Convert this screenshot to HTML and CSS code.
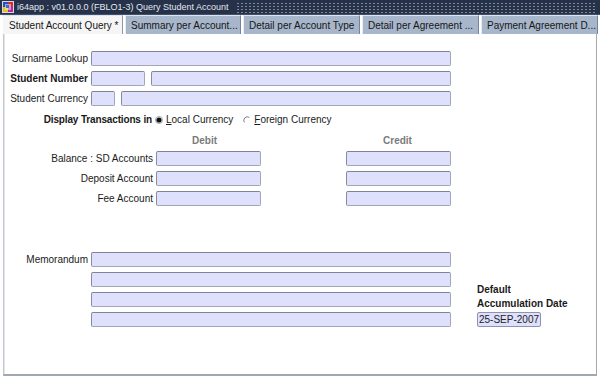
FILE: index.html
```html
<!DOCTYPE html>
<html>
<head>
<meta charset="utf-8">
<link rel="stylesheet" href="styles.css">
</head>
<body>
<div class="app">
  <div class="titlebar">
    <svg class="app-icon" width="12" height="12" viewBox="0 0 12 12">
      <rect x="0" y="0" width="12" height="12" fill="#d8d8e8"/>
      <rect x="1" y="1" width="5" height="5" fill="#2b4fb8"/>
      <rect x="6" y="1" width="5" height="5" fill="#d8283c"/>
      <rect x="1" y="6" width="5" height="5" fill="#e8c020"/>
      <rect x="6" y="6" width="5" height="5" fill="#b02ca0"/>
      <rect x="3" y="3" width="6" height="6" fill="#f0f0f0" opacity="0.55"/>
      <rect x="4" y="4" width="3" height="3" fill="#3070e0"/>
    </svg>
    <span class="title-text">i64app : v01.0.0.0 (FBLO1-3) Query Student Account</span>
    <span class="title-fill"></span>
  </div>
  <div class="tabs">
    <div class="tab active">Student Account Query *</div>
    <div class="tab w116">Summary per Account...</div>
    <div class="tab">Detail per Account Type</div>
    <div class="tab">Detail per Agreement ...</div>
    <div class="tab">Payment Agreement D...</div>
  </div>
  <div class="panel">
    <div class="row">
      <label class="lbl">Surname Lookup</label>
      <div class="field w360"></div>
    </div>
    <div class="row">
      <label class="lbl bold">Student Number</label>
      <div class="field w54"></div>
      <div class="field w300 gap6"></div>
    </div>
    <div class="row">
      <label class="lbl">Student Currency</label>
      <div class="field w24"></div>
      <div class="field w330 gap6"></div>
    </div>
    <div class="radio-row">
      <span class="radio-lbl bold">Display Transactions in</span>
      <svg class="radio" width="8" height="8" viewBox="0 0 8 8">
        <circle cx="4" cy="4" r="3.6" fill="#fff" stroke="#9a9a9a" stroke-width="0.8"/>
        <circle cx="4" cy="4" r="2.6" fill="#111"/>
      </svg>
      <span class="opt"><u>L</u>ocal Currency</span>
      <svg class="radio r2" width="8" height="8" viewBox="0 0 8 8">
        <path d="M6.4 1.4 A3.6 3.6 0 0 0 1.4 6.4" fill="none" stroke="#808080" stroke-width="1"/>
      </svg>
      <span class="opt"><u>F</u>oreign Currency</span>
    </div>
    <div class="heads">
      <span class="head">Debit</span>
      <span class="head credit">Credit</span>
    </div>
    <div class="row">
      <label class="lbl2">Balance : SD Accounts</label>
      <div class="field w105"></div>
      <div class="field w105 gap85"></div>
    </div>
    <div class="row">
      <label class="lbl2">Deposit Account</label>
      <div class="field w105"></div>
      <div class="field w105 gap85"></div>
    </div>
    <div class="row">
      <label class="lbl2">Fee Account</label>
      <div class="field w105"></div>
      <div class="field w105 gap85"></div>
    </div>
    <div class="memo-block">
      <div class="memo">
        <div class="row">
          <label class="lbl">Memorandum</label>
          <div class="field w360"></div>
        </div>
        <div class="row">
          <span class="lbl"></span>
          <div class="field w360"></div>
        </div>
        <div class="row">
          <span class="lbl"></span>
          <div class="field w360"></div>
        </div>
        <div class="row last">
          <span class="lbl"></span>
          <div class="field w360"></div>
        </div>
      </div>
      <div class="date-block">
        <div class="date-lbl bold">Default</div>
        <div class="date-lbl bold">Accumulation Date</div>
        <div class="field date">25-SEP-2007</div>
      </div>
    </div>
  </div>
</div>
</body>
</html>
```

FILE: styles.css
```css
html, body {
  margin: 0;
  padding: 0;
}
body {
  width: 600px;
  height: 378px;
  overflow: hidden;
  background: #ffffff;
  font-family: "Liberation Sans", Arial, sans-serif;
  font-size: 10px;
  color: #1a1a1a;
}
.app {
  display: flex;
  flex-direction: column;
  height: 378px;
}
.titlebar {
  height: 14px;
  display: flex;
  align-items: center;
  background: #25324a;
  color: #e4e8ee;
  padding-left: 2px;
  gap: 3px;
  border-bottom: 1px solid #44506a;
}
.app-icon {
  flex: none;
}
.title-text {
  white-space: nowrap;
  font-size: 9px;
}
.title-fill {
  flex: 1;
  height: 11px;
  margin: 0 3px 0 4px;
  background-color: #25324a;
  background-image: radial-gradient(circle, #7e889a 0.7px, transparent 1.1px);
  background-size: 4px 3px;
}
.tabs {
  height: 19px;
  display: flex;
  gap: 2px;
  padding-left: 2px;
  background: #ffffff;
}
.tab {
  width: 117px;
  box-sizing: border-box;
  display: flex;
  align-items: center;
  padding-left: 5px;
  background: #a7b6ca;
  border-top: 1px solid #dfe5ee;
  border-left: 1px solid #e8edf4;
  border-right: 1px solid #75849a;
  white-space: nowrap;
  overflow: hidden;
  color: #161616;
}
.tab.w116 {
  width: 116px;
}
.tab.active {
  width: 121px;
  padding-left: 6px;
  background: #f5f5f5;
  border-left-color: #ffffff;
  border-right-color: #8e96a4;
}
.panel {
  flex: 1;
  margin: 0 3px 2px 3px;
  border-left: 1px solid #c4c8ce;
  border-right: 1px solid #a4a9b2;
  border-bottom: 2px solid #a2a8b2;
  box-shadow: inset 1px 0 0 #e2e4e8;
  padding: 17px 0 0 1px;
  display: flex;
  flex-direction: column;
}
.row {
  display: flex;
  align-items: center;
  height: 15px;
  margin-bottom: 5px;
}
.lbl {
  width: 86px;
  padding-right: 3px;
  text-align: right;
  box-sizing: border-box;
  white-space: nowrap;
}
.lbl2 {
  width: 151px;
  padding-right: 3px;
  text-align: right;
  box-sizing: border-box;
  white-space: nowrap;
}
.bold {
  font-weight: bold;
}
.field {
  height: 15px;
  box-sizing: border-box;
  background: #dfe0fc;
  border: 1px solid #a2a7b8;
  border-top-color: #7e8496;
  border-left-color: #868c9e;
  border-radius: 2px;
  flex: none;
}
.w360 { width: 360px; }
.w54 { width: 54px; }
.w300 { width: 300px; }
.w24 { width: 24px; }
.w330 { width: 330px; }
.w105 { width: 105px; }
.gap6 { margin-left: 6px; }
.gap85 { margin-left: 85px; }
.radio-row {
  display: flex;
  align-items: center;
  height: 13px;
  margin-top: 2px;
}
.radio-lbl {
  width: 147px;
  text-align: right;
  white-space: nowrap;
  letter-spacing: -0.15px;
}
.radio {
  margin-left: 3px;
  flex: none;
}
.radio.r2 {
  margin-left: 10px;
}
.opt {
  margin-left: 3px;
  white-space: nowrap;
}
.heads {
  display: flex;
  height: 14px;
  align-items: center;
  margin-top: 7px;
  margin-bottom: 4px;
  padding-left: 151px;
}
.head {
  width: 105px;
  text-align: center;
  color: #7a7a7a;
  font-weight: bold;
  padding-right: 8px;
  box-sizing: border-box;
}
.head.credit {
  margin-left: 85px;
  padding-right: 2px;
}
.memo-block {
  display: flex;
  align-items: flex-end;
  margin-top: 41px;
}
.row.last {
  margin-bottom: 0;
}
.date-block {
  margin-left: 26px;
  display: flex;
  flex-direction: column;
}
.date-lbl {
  height: 14px;
  line-height: 14px;
  white-space: nowrap;
}
.field.date {
  width: 64px;
  margin-top: 1px;
  line-height: 13px;
  padding-left: 1px;
  border-color: #8c92b4;
  color: #222;
  white-space: nowrap;
}
```
